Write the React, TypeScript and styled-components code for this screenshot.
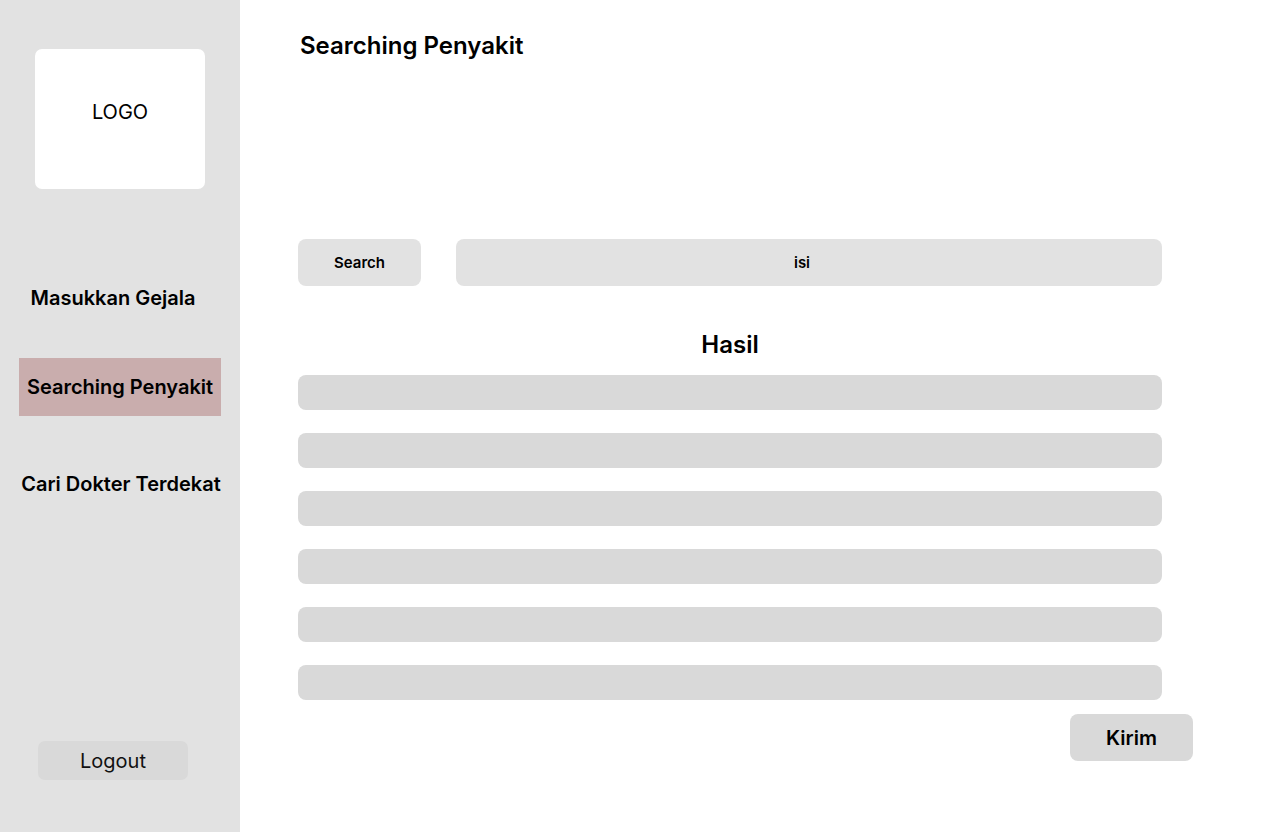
import React from "react";
import styled, { createGlobalStyle } from "styled-components";

const Global = createGlobalStyle`
  html, body { margin: 0; padding: 0; background: #ffffff; }
  body { font-family: Inter, "Noto Sans", sans-serif; color: #000; }
  * { box-sizing: border-box; }
`;

const Page = styled.div`
  display: flex;
  width: 1280px;
  height: 832px;
  overflow: hidden;
`;

const Sidebar = styled.aside`
  width: 240px;
  flex: 0 0 240px;
  height: 832px;
  background: #e2e2e2;
  display: flex;
  flex-direction: column;
  padding-top: 49px;
`;

const LogoBox = styled.div`
  width: 170px;
  height: 140px;
  margin-left: 35px;
  background: #ffffff;
  border-radius: 7px;
  display: flex;
  justify-content: center;
  padding-top: 51px;
  font-size: 20px;
  line-height: 24px;
  font-weight: 400;
`;

const Nav = styled.nav`
  display: flex;
  flex-direction: column;
  margin-top: 80px;
`;

const NavItem = styled.div<{ $active?: boolean; $left: number; $width: number; $top: number }>`
  height: 58px;
  margin-top: ${(p) => p.$top}px;
  margin-left: ${(p) => p.$left}px;
  width: ${(p) => p.$width}px;
  display: flex;
  align-items: center;
  justify-content: center;
  font-size: 20px;
  font-weight: 600;
  white-space: nowrap;
  background: ${(p) => (p.$active ? "#c9adad" : "transparent")};
`;

const Logout = styled.button`
  margin-top: auto;
  margin-bottom: 52px;
  margin-left: 38px;
  width: 150px;
  height: 39px;
  border: none;
  border-radius: 7px;
  background: #d9d9d9;
  font-family: Inter, "Noto Sans", sans-serif;
  font-size: 20px;
  font-weight: 400;
  color: #111;
  padding: 0;
`;

const Main = styled.main`
  flex: 1;
  display: flex;
  flex-direction: column;
  padding: 31px 0 0 58px;
  width: 864px;
`;

const Title = styled.h1`
  margin: 0 0 0 2px;
  font-size: 24px;
  line-height: 30px;
  font-weight: 600;
`;

const SearchRow = styled.div`
  display: flex;
  gap: 35px;
  margin-top: 178px;
  width: 864px;
`;

const Field = styled.div<{ $width: number; $shift?: number }>`
  width: ${(p) => p.$width}px;
  height: 47px;
  background: #e2e2e2;
  border-radius: 8px;
  display: flex;
  align-items: center;
  justify-content: center;
  padding-right: ${(p) => p.$shift ?? 0}px;
  font-size: 15px;
  font-weight: 600;
`;

const Hasil = styled.h2`
  margin: 44px 0 0;
  width: 864px;
  text-align: center;
  font-size: 24px;
  line-height: 29px;
  font-weight: 600;
`;

const Results = styled.div`
  display: flex;
  flex-direction: column;
  gap: 23px;
  margin-top: 16px;
  width: 864px;
`;

const ResultBar = styled.div`
  height: 35px;
  background: #d9d9d9;
  border-radius: 8px;
`;

const Footer = styled.div`
  display: flex;
  justify-content: flex-end;
  width: 895px;
  margin-top: 14px;
`;

const Kirim = styled.button`
  width: 123px;
  height: 47px;
  border: none;
  border-radius: 8px;
  background: #d9d9d9;
  font-family: Inter, "Noto Sans", sans-serif;
  font-size: 20px;
  font-weight: 600;
  color: #000;
  padding: 0;
`;

export default function App() {
  return (
    <>
      <Global />
      <Page>
        <Sidebar>
          <LogoBox>LOGO</LogoBox>
          <Nav>
            <NavItem $left={19} $width={188} $top={0}>Masukkan Gejala</NavItem>
            <NavItem $active $left={19} $width={202} $top={31}>Searching Penyakit</NavItem>
            <NavItem $left={21} $width={200} $top={39}>Cari Dokter Terdekat</NavItem>
          </Nav>
          <Logout>Logout</Logout>
        </Sidebar>
        <Main>
          <Title>Searching Penyakit</Title>
          <SearchRow>
            <Field $width={123}>Search</Field>
            <Field $width={706} $shift={14}>isi</Field>
          </SearchRow>
          <Hasil>Hasil</Hasil>
          <Results>
            {Array.from({ length: 6 }).map((_, i) => (
              <ResultBar key={i} />
            ))}
          </Results>
          <Footer>
            <Kirim>Kirim</Kirim>
          </Footer>
        </Main>
      </Page>
    </>
  );
}
